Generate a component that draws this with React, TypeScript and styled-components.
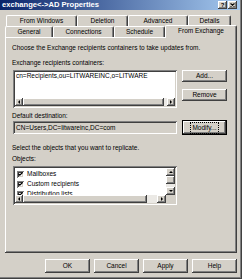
import React from 'react';
import styled, { createGlobalStyle, css } from 'styled-components';

const face = '#d4d0c8';
const light = '#ffffff';
const shadow = '#808080';
const dark = '#404040';

// classic 3D edges
const raised = css`
    box-shadow: inset -1px -1px ${dark}, inset 1px 1px ${light}, inset -2px -2px ${shadow};
`;
const sunken = css`
    box-shadow: inset 1px 1px ${shadow}, inset -1px -1px ${light}, inset 2px 2px ${dark}, inset -2px -2px ${face};
`;

const GlobalStyle = createGlobalStyle`
    html, body {
        margin: 0;
        padding: 0;
        background: ${face};
    }
    body {
        font-family: "Liberation Sans", Arial, sans-serif;
        font-size: 6.5px;
        color: #000;
    }
`;

const Window = styled.div`
    width: 242px;
    height: 279px;
    box-sizing: border-box;
    display: flex;
    flex-direction: column;
    background: ${face};
    padding: 0 2px 2px 0;
    box-shadow: inset -1px -1px ${dark}, inset -2px -2px ${shadow};
`;

const TitleBar = styled.div`
    height: 10px;
    flex: 0 0 10px;
    display: flex;
    align-items: center;
    justify-content: space-between;
    padding: 0 3px 0 2px;
    background: linear-gradient(to right, #0a246a, #a6caf0);
`;

const Title = styled.span`
    color: #fff;
    font-weight: bold;
    font-size: 7.6px;
    line-height: 10px;
    white-space: nowrap;
`;

const CaptionButtons = styled.div`
    display: flex;
    gap: 1px;
`;

const CaptionButton = styled.div`
    width: 9px;
    height: 8px;
    box-sizing: border-box;
    display: flex;
    align-items: center;
    justify-content: center;
    background: ${face};
    ${raised};
    font-weight: bold;
    font-size: 6px;
    line-height: 8px;
`;

const Body = styled.div`
    flex: 1;
    display: flex;
    flex-direction: column;
    padding: 5px 3px 0 5px;
`;

const TabStrip = styled.div`
    display: flex;
    flex-direction: column;
`;

const TabRow = styled.div<{ $indent?: number }>`
    display: flex;
    height: 11px;
    padding-left: ${p => p.$indent ?? 0}px;
    align-items: flex-end;
`;

const Tab = styled.div<{ $w: number; $active?: boolean }>`
    width: ${p => p.$w}px;
    height: ${p => (p.$active ? 13 : 11)}px;
    margin-top: ${p => (p.$active ? -2 : 0)}px;
    margin-bottom: ${p => (p.$active ? -1 : 0)}px;
    box-sizing: border-box;
    position: relative;
    z-index: ${p => (p.$active ? 1 : 0)};
    display: flex;
    align-items: center;
    justify-content: center;
    background: ${face};
    border-top: 1px solid ${light};
    border-left: 1px solid ${light};
    border-right: 1px solid ${dark};
    border-radius: 2px 2px 0 0;
    box-shadow: inset -1px 0 ${shadow};
    white-space: nowrap;
    line-height: 8px;
    padding-bottom: ${p => (p.$active ? 2 : 0)}px;
`;

const Panel = styled.div`
    height: 216px;
    box-sizing: border-box;
    display: flex;
    flex-direction: column;
    padding: 7px 7px 6px;
    background: ${face};
    ${raised};
`;

const Text = styled.div<{ $gap?: number }>`
    line-height: 8px;
    margin-top: ${p => p.$gap ?? 0}px;
    white-space: nowrap;
`;

const FieldRow = styled.div<{ $gap?: number }>`
    display: flex;
    align-items: flex-start;
    gap: 5px;
    margin-top: ${p => p.$gap ?? 0}px;
    margin-left: 1px;
`;

const ListBox = styled.div<{ $h: number }>`
    width: 164px;
    height: ${p => p.$h}px;
    box-sizing: border-box;
    padding: 2px;
    background: #fff;
    ${sunken};
    display: grid;
    grid-template-rows: 1fr 8px;
`;

const ListContent = styled.div<{ $top?: number }>`
    overflow: hidden;
    padding: ${p => p.$top ?? 0}px 1px 0;
    line-height: 8px;
    white-space: nowrap;
`;

const ObjectsBox = styled(ListBox)`
    grid-template-columns: 1fr 9px;
`;

const HScroll = styled.div`
    display: flex;
    height: 8px;
    overflow: hidden;
`;

const VScroll = styled.div`
    display: flex;
    flex-direction: column;
    width: 9px;
`;

const Track = styled.div<{ $size: number }>`
    flex: 0 0 ${p => p.$size}px;
    background: #ebe9e5;
`;

const Thumb = styled.div<{ $size?: number }>`
    flex: ${p => (p.$size ? `0 0 ${p.$size}px` : '1')};
    background: ${face};
    ${raised};
`;

const ScrollButton = styled.div<{ $w: number; $h: number }>`
    flex: 0 0 auto;
    width: ${p => p.$w}px;
    height: ${p => p.$h}px;
    box-sizing: border-box;
    display: flex;
    align-items: center;
    justify-content: center;
    background: ${face};
    ${raised};
`;

const Corner = styled.div`
    background: ${face};
`;

const ButtonColumn = styled.div`
    display: flex;
    flex-direction: column;
    gap: 7px;
`;

const Button = styled.div<{ $h?: number; $isDefault?: boolean }>`
    width: 45px;
    height: ${p => p.$h ?? 12}px;
    box-sizing: border-box;
    display: flex;
    align-items: center;
    justify-content: center;
    background: ${face};
    line-height: 8px;
    ${p =>
        p.$isDefault
            ? css`
                  border: 1px solid #000;
                  box-shadow: inset -1px -1px ${dark}, inset 1px 1px ${light}, inset -2px -2px ${shadow};
              `
            : raised};
`;

const FocusLabel = styled.span`
    outline: 1px dotted #000;
    outline-offset: 1px;
`;

const ReadOnlyBox = styled.div`
    width: 164px;
    height: 13px;
    margin-top: 1px;
    box-sizing: border-box;
    padding: 0 3px;
    display: flex;
    align-items: center;
    background: ${face};
    ${sunken};
    white-space: nowrap;
`;

const CheckRow = styled.div`
    display: flex;
    align-items: center;
    gap: 3px;
    height: 10px;
    padding-left: 1px;
`;

const CheckBox = styled.div`
    width: 7px;
    height: 7px;
    box-sizing: border-box;
    background: #fff;
    ${sunken};
    display: flex;
    align-items: center;
    justify-content: center;
`;

const ButtonBar = styled.div`
    display: flex;
    justify-content: flex-end;
    gap: 4px;
    margin-top: 6px;
`;

type Dir = 'left' | 'right' | 'up' | 'down';

const ArrowButton: React.FC<{ dir: Dir; w: number; h: number }> = ({ dir, w, h }) => {
    const horiz = dir === 'left' || dir === 'right';
    const points = {
        left: '2,0 0,2 2,4',
        right: '0,0 2,2 0,4',
        up: '0,2 2,0 4,2',
        down: '0,0 2,2 4,0',
    }[dir];
    return (
        <ScrollButton $w={w} $h={h}>
            <svg width={horiz ? 2 : 4} height={horiz ? 4 : 2} viewBox={horiz ? '0 0 2 4' : '0 0 4 2'}>
                <polygon points={points} fill="#000" />
            </svg>
        </ScrollButton>
    );
};

const Check: React.FC = () => (
    <CheckBox>
        <svg width="5" height="4" viewBox="0 0 5 4">
            <polyline points="0.5,1.8 1.8,3.2 4.5,0.5" fill="none" stroke="#000" strokeWidth="1.1" />
        </svg>
    </CheckBox>
);

const objects = ['Mailboxes', 'Custom recipients', 'Distribution lists'];

export default function App() {
    return (
        <>
            <GlobalStyle />
            <Window>
                <TitleBar>
                    <Title>{'exchange<->AD Properties'}</Title>
                    <CaptionButtons>
                        <CaptionButton>?</CaptionButton>
                        <CaptionButton>
                            <svg width="5" height="4" viewBox="0 0 5 4">
                                <path d="M0.5 0.5 L4.5 3.5 M4.5 0.5 L0.5 3.5" stroke="#000" strokeWidth="1.1" />
                            </svg>
                        </CaptionButton>
                    </CaptionButtons>
                </TitleBar>
                <Body>
                    <TabStrip>
                        <TabRow $indent={1}>
                            <Tab $w={71}>From Windows</Tab>
                            <Tab $w={51}>Deletion</Tab>
                            <Tab $w={60}>Advanced</Tab>
                            <Tab $w={43}>Details</Tab>
                        </TabRow>
                        <TabRow>
                            <Tab $w={48}>General</Tab>
                            <Tab $w={61}>Connections</Tab>
                            <Tab $w={51}>Schedule</Tab>
                            <Tab $w={72} $active>
                                From Exchange
                            </Tab>
                        </TabRow>
                    </TabStrip>
                    <Panel>
                        <Text>Choose the Exchange recipients containers to take updates from.</Text>
                        <Text $gap={7}>Exchange recipients containers:</Text>
                        <FieldRow $gap={3}>
                            <ListBox $h={38}>
                                <ListContent>cn=Recipients,ou=LITWAREINC,o=LITWARE</ListContent>
                                <HScroll>
                                    <ArrowButton dir="left" w={8} h={8} />
                                    <Thumb />
                                    <Track $size={3} />
                                    <ArrowButton dir="right" w={8} h={8} />
                                </HScroll>
                            </ListBox>
                            <ButtonColumn>
                                <Button>Add...</Button>
                                <Button>Remove</Button>
                            </ButtonColumn>
                        </FieldRow>
                        <Text $gap={4}>Default destination:</Text>
                        <FieldRow>
                            <ReadOnlyBox>CN=Users,DC=litwareinc,DC=com</ReadOnlyBox>
                            <Button $h={15} $isDefault>
                                <FocusLabel>Modify...</FocusLabel>
                            </Button>
                        </FieldRow>
                        <Text $gap={9}>Select the objects that you want to replicate.</Text>
                        <Text $gap={3}>Objects:</Text>
                        <FieldRow $gap={3}>
                            <ObjectsBox $h={39}>
                                <ListContent $top={1}>
                                    {objects.map(name => (
                                        <CheckRow key={name}>
                                            <Check />
                                            {name}
                                        </CheckRow>
                                    ))}
                                </ListContent>
                                <VScroll>
                                    <ArrowButton dir="up" w={9} h={8} />
                                    <Thumb $size={8} />
                                    <Track $size={3} />
                                    <ArrowButton dir="down" w={9} h={8} />
                                </VScroll>
                                <HScroll>
                                    <ArrowButton dir="left" w={8} h={8} />
                                    <Thumb />
                                    <Track $size={10} />
                                    <ArrowButton dir="right" w={9} h={8} />
                                </HScroll>
                                <Corner />
                            </ObjectsBox>
                        </FieldRow>
                    </Panel>
                    <ButtonBar>
                        <Button $h={14}>OK</Button>
                        <Button $h={14}>Cancel</Button>
                        <Button $h={14}>Apply</Button>
                        <Button $h={14}>Help</Button>
                    </ButtonBar>
                </Body>
            </Window>
        </>
    );
}
